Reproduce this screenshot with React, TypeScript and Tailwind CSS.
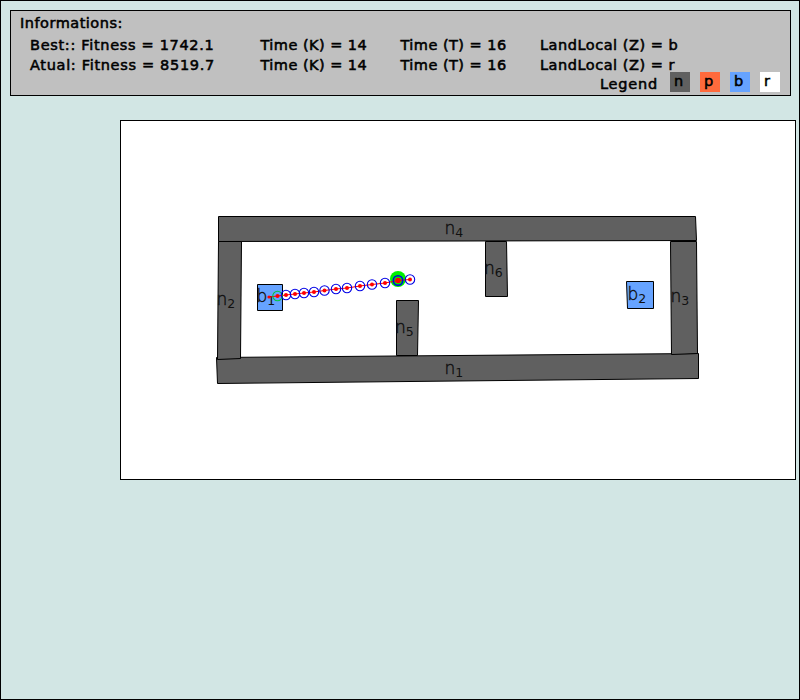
const stats = [
  ['Best:: Fitness = 1742.1', 'Time (K) = 14', 'Time (T) = 16', 'LandLocal (Z) = b'],
  ['Atual: Fitness = 8519.7', 'Time (K) = 14', 'Time (T) = 16', 'LandLocal (Z) = r'],
];

const columnTracking = ['tracking-[0.68px]', 'tracking-[0.46px]', 'tracking-[0.46px]', 'tracking-[0.52px]'];

const walls = [
  '218.5,216.5 695.5,216.5 696.5,240.5 218.5,241.5',
  '216.5,357.5 698.5,353.5 698.5,378.5 217.5,383.5',
  '218.5,241.5 241.5,241.5 240.5,358.5 217.5,359.5',
  '670.5,241.5 696.5,241.5 697.5,353.5 671.5,354.5',
  '396.5,300.5 418.5,300.5 417.5,355.5 396.5,355.5',
  '485.5,241.5 506.5,241.5 507.5,296.5 485.5,296.5',
];

const bases = ['257.5,284.5 282.5,284.5 282.5,310.5 257.5,310.5', '626.5,281.5 653.5,281.5 653.5,308.5 627.5,308.5'];

const labels: [string, string, number, number][] = [
  ['n', '4', 444.5, 234],
  ['n', '1', 444.5, 374],
  ['n', '2', 216.5, 304.5],
  ['n', '3', 670.5, 302],
  ['n', '5', 395, 333],
  ['n', '6', 484, 274],
  ['b', '1', 256.5, 302],
  ['b', '2', 627.5, 300],
];

const path: [number, number][] = [
  [269, 297], [277.5, 296], [286, 295], [295, 294], [304, 293], [314, 292], [324.5, 290.5],
  [336, 289], [347, 288], [360, 286], [372, 284.5], [385, 283], [398, 280.5], [410, 279.5],
];

const legend = [
  ['n', 'bg-[#606060]'],
  ['p', 'bg-[#ff6a3c]'],
  ['b', 'bg-[#66a3ff]'],
  ['r', 'bg-white'],
];

function Info() {
  return (
    <header className="ml-[9px] mt-[9px] flex h-[86px] w-[781px] flex-col border border-black bg-[#c0c0c0] text-[14.5px] leading-5 tracking-[0.5px] [-webkit-text-stroke:0.55px_black]">
      <div className="h-6 pl-[9px] pt-0.5">Informations:</div>
      {stats.map((row) => (
        <div key={row[0]} className="grid h-5 grid-cols-[230.5px_140px_139.5px_auto] whitespace-nowrap pl-[19px]">
          {row.map((text, i) => (
            <span key={text} className={columnTracking[i]}>{text}</span>
          ))}
        </div>
      ))}
      <div className="-mt-[3px] flex pr-[10px]">
        <span className="ml-[589px] w-[70px] pt-[2px] tracking-[0.8px]">Legend</span>
        <div className="flex gap-[10px]">
          {legend.map(([name, colour]) => (
            <span key={name} className={`h-5 w-5 pl-1 leading-[19px] ${colour}`}>
              {name}
            </span>
          ))}
        </div>
      </div>
    </header>
  );
}

function Arena() {
  return (
    <main className="ml-[119px] mt-6 h-[360px] w-[676px] border border-black bg-white">
      <svg width="674" height="358" viewBox="121 121 674 358" className="block">
        <g fill="#606060" stroke="black" strokeWidth="1">
          {walls.map((points) => <polygon key={points} points={points} />)}
        </g>
        <g fill="#66a3ff" stroke="black">
          {bases.map((points) => <polygon key={points} points={points} />)}
        </g>
        <g fill="#101010" stroke="#101010" strokeWidth="0.4" fontSize="17" className="font-['DejaVu_Sans_Light','DejaVu_Sans',sans-serif] font-extralight">
          {labels.map(([name, index, x, y]) => (
            <text key={name + index} x={x} y={y}>
              {name}
              <tspan dy="3" fontSize="12.5" stroke="none" className="font-['DejaVu_Sans',sans-serif] font-normal">{index}</tspan>
            </text>
          ))}
        </g>
        <circle cx="398" cy="279" r="8" fill="#00f000" />
        <polyline points={path.map((p) => p.join(',')).join(' ')} fill="none" stroke="red" strokeWidth="1.2" />
        {path.map(([x, y], i) => (
          <g key={x}>
            <circle cx={x} cy={y} r={i === 12 ? 2.8 : i === 0 ? 1.6 : 2} fill="red" />
            {i > 0 && (
              <circle cx={x} cy={y} r="4.7" fill="none" stroke={i === 1 ? '#00c83c' : '#0000e6'} strokeWidth={i === 12 ? 1.6 : 1.1} />
            )}
          </g>
        ))}
      </svg>
    </main>
  );
}

export default function App() {
  return (
    <div className="flex h-[700px] w-[800px] flex-col overflow-hidden border border-black bg-[#d2e6e4] font-['DejaVu_Sans',sans-serif] text-black">
      <Info />
      <Arena />
    </div>
  );
}
